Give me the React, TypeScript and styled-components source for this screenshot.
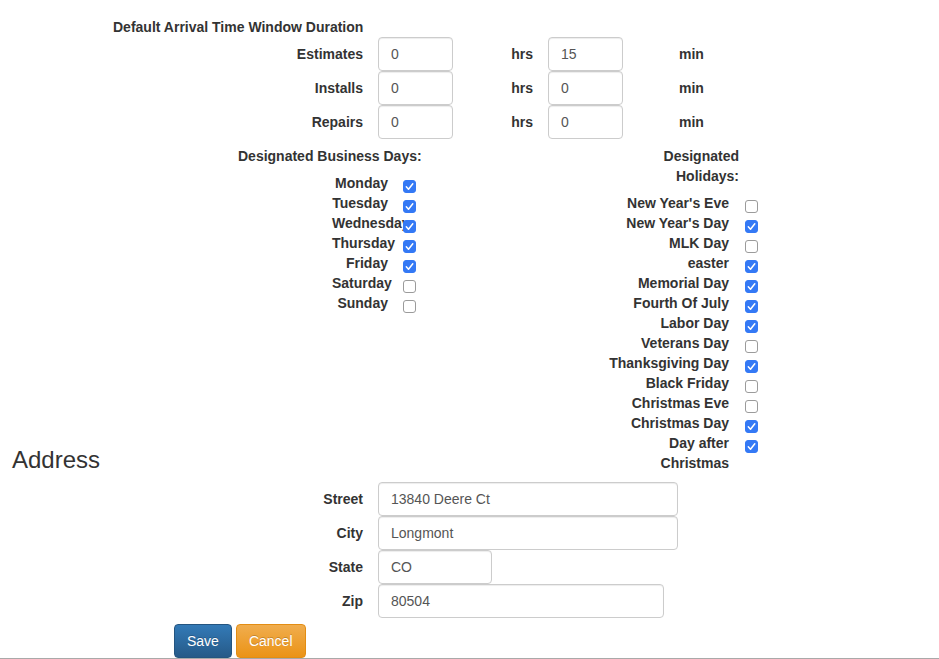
import React from "react";
import styled, { createGlobalStyle } from "styled-components";

const GlobalStyle = createGlobalStyle`
  *, *::before, *::after { box-sizing: border-box; }
  html, body { margin: 0; padding: 0; background: #fff; }
  body {
    font-family: "Liberation Sans", Arial, Helvetica, sans-serif;
    font-size: 14px;
    line-height: 20px;
    color: #333;
  }
`;

const Page = styled.div`
  padding-top: 17px;
  width: 939px;
`;

const SectionTitle = styled.div`
  margin-left: 113px;
  font-weight: bold;
  line-height: 20px;
`;

const FormRow = styled.div`
  display: flex;
  align-items: center;
  height: 34px;
`;

const FieldLabel = styled.label`
  width: 265px;
  margin-left: 113px;
  padding-right: 15px;
  text-align: right;
  font-weight: bold;
  flex-shrink: 0;
`;

const TextInput = styled.input<{ $w: number }>`
  width: ${(p) => p.$w}px;
  height: 34px;
  flex-shrink: 0;
  padding: 6px 12px;
  border: 1px solid #ccc;
  border-radius: 4px;
  box-shadow: inset 0 1px 1px rgba(0, 0, 0, 0.075);
  font-family: "Liberation Sans", Arial, Helvetica, sans-serif;
  font-size: 14px;
  color: #555;
  background: #fff;
  outline: none;
`;

const HrsUnit = styled.span`
  width: 95px;
  padding-right: 15px;
  text-align: right;
  font-weight: bold;
  flex-shrink: 0;
`;

const MinUnit = styled.span`
  padding-left: 56px;
  font-weight: bold;
`;

const DaysSection = styled.div`
  display: flex;
  margin-top: 7px;
`;

const DayColumn = styled.div<{ $left: number; $width: number }>`
  margin-left: ${(p) => p.$left}px;
  width: ${(p) => p.$width}px;
  flex-shrink: 0;
`;

const ColumnTitle = styled.div<{ $width: number; $nowrap?: boolean }>`
  width: ${(p) => p.$width}px;
  text-align: ${(p) => (p.$nowrap ? "left" : "right")};
  white-space: ${(p) => (p.$nowrap ? "nowrap" : "normal")};
  font-weight: bold;
  line-height: 20px;
  margin-bottom: 7px;
`;

const DayRow = styled.div<{ $indent: number }>`
  display: flex;
  align-items: flex-start;
  padding-left: ${(p) => p.$indent}px;
  min-height: 20px;
`;

const DayLabel = styled.span<{ $width: number; $gap: number }>`
  width: ${(p) => p.$width}px;
  margin-right: ${(p) => p.$gap}px;
  flex-shrink: 0;
  text-align: right;
  font-weight: bold;
  line-height: 20px;
`;

const CheckBox = styled.span<{ $checked: boolean }>`
  width: 13px;
  height: 13px;
  margin-top: 7px;
  flex-shrink: 0;
  border-radius: 3px;
  display: flex;
  align-items: center;
  justify-content: center;
  background: ${(p) => (p.$checked ? "#3479f5" : "#fff")};
  border: 1px solid ${(p) => (p.$checked ? "#3479f5" : "#9b9b9b")};
`;

const AddressHeading = styled.h3`
  margin: -26px 0 9px 12px;
  font-size: 24px;
  line-height: 26.4px;
  font-weight: normal;
  color: #333;
`;

const ButtonBar = styled.div`
  display: flex;
  gap: 4px;
  margin: 6px 0 0 174px;
`;

const Button = styled.button<{ $variant: "primary" | "warning" }>`
  height: 34px;
  padding: 6px 12px;
  border-radius: 4px;
  font-family: "Liberation Sans", Arial, Helvetica, sans-serif;
  font-size: 14px;
  line-height: 20px;
  color: #fff;
  text-shadow: 0 -1px 0 rgba(0, 0, 0, 0.2);
  cursor: pointer;
  border: 1px solid ${(p) => (p.$variant === "primary" ? "#245580" : "#e38d13")};
  background: ${(p) =>
    p.$variant === "primary"
      ? "linear-gradient(to bottom, #337ab7 0%, #265a88 100%)"
      : "linear-gradient(to bottom, #f0ad4e 0%, #eb9316 100%)"};
`;

const BottomRule = styled.div`
  border-top: 1px solid #a9a9a9;
`;

const Check = ({ checked }: { checked: boolean }) => (
  <CheckBox $checked={checked}>
    {checked && (
      <svg width="11" height="11" viewBox="0 0 11 11">
        <polyline
          points="2.3,5.8 4.5,8.2 8.8,2.8"
          fill="none"
          stroke="#fff"
          strokeWidth="1.5"
          strokeLinecap="round"
          strokeLinejoin="round"
        />
      </svg>
    )}
  </CheckBox>
);

const durations = [
  { label: "Estimates", hrs: "0", min: "15" },
  { label: "Installs", hrs: "0", min: "0" },
  { label: "Repairs", hrs: "0", min: "0" },
];

const businessDays: [string, boolean][] = [
  ["Monday", true],
  ["Tuesday", true],
  ["Wednesday", true],
  ["Thursday", true],
  ["Friday", true],
  ["Saturday", false],
  ["Sunday", false],
];

const holidays: [string, boolean][] = [
  ["New Year's Eve", false],
  ["New Year's Day", true],
  ["MLK Day", false],
  ["easter", true],
  ["Memorial Day", true],
  ["Fourth Of July", true],
  ["Labor Day", true],
  ["Veterans Day", false],
  ["Thanksgiving Day", true],
  ["Black Friday", false],
  ["Christmas Eve", false],
  ["Christmas Day", true],
  ["Day after Christmas", true],
];

const address = [
  { label: "Street", value: "13840 Deere Ct", w: 300 },
  { label: "City", value: "Longmont", w: 300 },
  { label: "State", value: "CO", w: 114 },
  { label: "Zip", value: "80504", w: 286 },
];

export default function App() {
  return (
    <>
      <GlobalStyle />
      <Page>
        <SectionTitle>Default Arrival Time Window Duration</SectionTitle>
        {durations.map((d) => (
          <FormRow key={d.label}>
            <FieldLabel>{d.label}</FieldLabel>
            <TextInput $w={75} defaultValue={d.hrs} />
            <HrsUnit>hrs</HrsUnit>
            <TextInput $w={75} defaultValue={d.min} />
            <MinUnit>min</MinUnit>
          </FormRow>
        ))}

        <DaysSection>
          <DayColumn $left={238} $width={180}>
            <ColumnTitle $width={180} $nowrap>
              Designated Business Days:
            </ColumnTitle>
            {businessDays.map(([name, on]) => (
              <DayRow key={name} $indent={94}>
                <DayLabel $width={56} $gap={15}>
                  {name}
                </DayLabel>
                <Check checked={on} />
              </DayRow>
            ))}
          </DayColumn>
          <DayColumn $left={191} $width={150}>
            <ColumnTitle $width={130}>Designated Holidays:</ColumnTitle>
            {holidays.map(([name, on]) => (
              <DayRow key={name} $indent={0}>
                <DayLabel $width={120} $gap={16}>
                  {name}
                </DayLabel>
                <Check checked={on} />
              </DayRow>
            ))}
          </DayColumn>
        </DaysSection>

        <AddressHeading>Address</AddressHeading>
        {address.map((a) => (
          <FormRow key={a.label}>
            <FieldLabel>{a.label}</FieldLabel>
            <TextInput $w={a.w} defaultValue={a.value} />
          </FormRow>
        ))}

        <ButtonBar>
          <Button $variant="primary">Save</Button>
          <Button $variant="warning">Cancel</Button>
        </ButtonBar>
        <BottomRule />
      </Page>
    </>
  );
}
